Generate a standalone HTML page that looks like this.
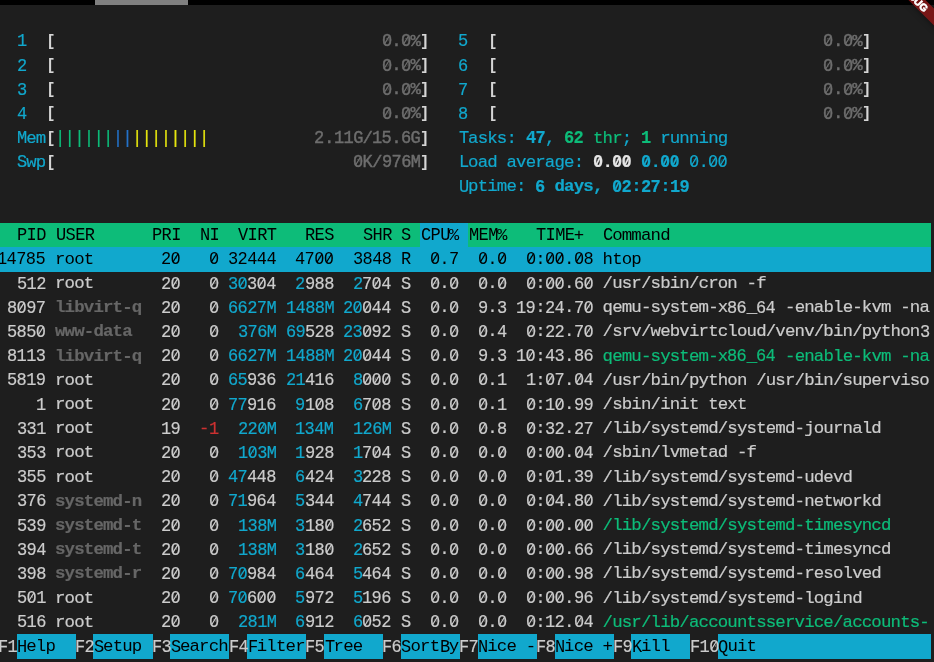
<!DOCTYPE html>
<html><head><meta charset="utf-8"><style>
html,body{margin:0;padding:0;width:934px;height:662px;overflow:hidden;background:#1e1e1e;}
#scr{position:absolute;left:0;top:0;width:934px;height:662px;overflow:hidden;background:#1e1e1e;}
.bg{position:absolute;}
.t{position:absolute;white-space:pre;font-family:"Liberation Mono",monospace;font-size:17.4px;letter-spacing:-0.836px;-webkit-text-stroke:0.2px currentColor;line-height:24.206px;height:24.206px;}
.b{font-weight:bold;}
.d{font-size:18.9px;letter-spacing:-0.6689px;transform:scaleX(0.9);transform-origin:0 0;}
.k{-webkit-text-stroke:0;}
.m{-webkit-text-stroke:0.45px currentColor;}
#txt{position:absolute;left:0;top:0;width:934px;height:662px;will-change:transform;}
#topbar{position:absolute;left:0;top:0;width:934px;height:4.9px;background:#000;}
#thumb{position:absolute;left:95px;top:0;width:92.7px;height:4.9px;background:#808080;}
#bshadow{position:absolute;width:80px;height:12px;background:rgba(0,0,0,0.5);box-shadow:0 0 6px rgba(0,0,0,0.5);transform-origin:40px -28px;transform:rotate(45deg);}
#banner{position:absolute;width:80px;height:12px;background:rgba(183,28,28,0.627);
 transform-origin:40px -28px;transform:rotate(45deg);font-family:"Liberation Sans",sans-serif;font-weight:bold;font-size:10.2px;line-height:14px;color:#fff;text-align:center;-webkit-text-stroke:0.7px #fff;text-indent:2px;}
</style></head><body><div id="scr">

<div class="bg" style="left:-2.60px;top:222.70px;width:933.23px;height:25.00px;background:#0dbc79"></div>
<div class="bg" style="left:420.04px;top:222.70px;width:48.03px;height:25.00px;background:#11a8cd"></div>
<div class="bg" style="left:-2.60px;top:246.91px;width:933.23px;height:25.00px;background:#11a8cd"></div>
<div class="bg" style="left:16.61px;top:634.21px;width:59.13px;height:25.00px;background:#11a8cd"></div>
<div class="bg" style="left:93.45px;top:634.21px;width:59.13px;height:25.00px;background:#11a8cd"></div>
<div class="bg" style="left:170.30px;top:634.21px;width:59.13px;height:25.00px;background:#11a8cd"></div>
<div class="bg" style="left:247.14px;top:634.21px;width:59.13px;height:25.00px;background:#11a8cd"></div>
<div class="bg" style="left:323.99px;top:634.21px;width:59.13px;height:25.00px;background:#11a8cd"></div>
<div class="bg" style="left:400.83px;top:634.21px;width:59.13px;height:25.00px;background:#11a8cd"></div>
<div class="bg" style="left:477.67px;top:634.21px;width:59.13px;height:25.00px;background:#11a8cd"></div>
<div class="bg" style="left:554.52px;top:634.21px;width:59.13px;height:25.00px;background:#11a8cd"></div>
<div class="bg" style="left:631.36px;top:634.21px;width:59.13px;height:25.00px;background:#11a8cd"></div>
<div class="bg" style="left:717.81px;top:634.21px;width:212.82px;height:25.00px;background:#11a8cd"></div>
<div id="txt">
<div class="t d" style="left:16.61px;top:29.46px;color:#11a8cd">1</div>
<div class="t b" style="left:45.43px;top:29.86px;color:#e5e5e5;transform-origin:8.1px 4.3px;transform:translateY(1.2px) scale(0.83,0.9);color:#d6d6d6">[</div>
<div class="t m d" style="left:381.62px;top:29.46px;color:#6e6e6e">0</div>
<div class="t m" style="left:391.23px;top:29.86px;color:#6e6e6e">.</div>
<div class="t m d" style="left:400.83px;top:29.46px;color:#6e6e6e">0</div>
<div class="t m" style="left:410.44px;top:29.86px;color:#6e6e6e">%</div>
<div class="t b" style="left:420.04px;top:29.86px;color:#e5e5e5;transform-origin:1.9px 4.3px;transform:translateY(1.2px) scale(0.83,0.9);color:#d6d6d6">]</div>
<div class="t d" style="left:458.46px;top:29.46px;color:#11a8cd">5</div>
<div class="t b" style="left:487.28px;top:29.86px;color:#e5e5e5;transform-origin:8.1px 4.3px;transform:translateY(1.2px) scale(0.83,0.9);color:#d6d6d6">[</div>
<div class="t m d" style="left:823.47px;top:29.46px;color:#6e6e6e">0</div>
<div class="t m" style="left:833.08px;top:29.86px;color:#6e6e6e">.</div>
<div class="t m d" style="left:842.68px;top:29.46px;color:#6e6e6e">0</div>
<div class="t m" style="left:852.29px;top:29.86px;color:#6e6e6e">%</div>
<div class="t b" style="left:861.89px;top:29.86px;color:#e5e5e5;transform-origin:1.9px 4.3px;transform:translateY(1.2px) scale(0.83,0.9);color:#d6d6d6">]</div>
<div class="t d" style="left:16.61px;top:53.66px;color:#11a8cd">2</div>
<div class="t b" style="left:45.43px;top:54.06px;color:#e5e5e5;transform-origin:8.1px 4.3px;transform:translateY(1.2px) scale(0.83,0.9);color:#d6d6d6">[</div>
<div class="t m d" style="left:381.62px;top:53.66px;color:#6e6e6e">0</div>
<div class="t m" style="left:391.23px;top:54.06px;color:#6e6e6e">.</div>
<div class="t m d" style="left:400.83px;top:53.66px;color:#6e6e6e">0</div>
<div class="t m" style="left:410.44px;top:54.06px;color:#6e6e6e">%</div>
<div class="t b" style="left:420.04px;top:54.06px;color:#e5e5e5;transform-origin:1.9px 4.3px;transform:translateY(1.2px) scale(0.83,0.9);color:#d6d6d6">]</div>
<div class="t d" style="left:458.46px;top:53.66px;color:#11a8cd">6</div>
<div class="t b" style="left:487.28px;top:54.06px;color:#e5e5e5;transform-origin:8.1px 4.3px;transform:translateY(1.2px) scale(0.83,0.9);color:#d6d6d6">[</div>
<div class="t m d" style="left:823.47px;top:53.66px;color:#6e6e6e">0</div>
<div class="t m" style="left:833.08px;top:54.06px;color:#6e6e6e">.</div>
<div class="t m d" style="left:842.68px;top:53.66px;color:#6e6e6e">0</div>
<div class="t m" style="left:852.29px;top:54.06px;color:#6e6e6e">%</div>
<div class="t b" style="left:861.89px;top:54.06px;color:#e5e5e5;transform-origin:1.9px 4.3px;transform:translateY(1.2px) scale(0.83,0.9);color:#d6d6d6">]</div>
<div class="t d" style="left:16.61px;top:77.87px;color:#11a8cd">3</div>
<div class="t b" style="left:45.43px;top:78.27px;color:#e5e5e5;transform-origin:8.1px 4.3px;transform:translateY(1.2px) scale(0.83,0.9);color:#d6d6d6">[</div>
<div class="t m d" style="left:381.62px;top:77.87px;color:#6e6e6e">0</div>
<div class="t m" style="left:391.23px;top:78.27px;color:#6e6e6e">.</div>
<div class="t m d" style="left:400.83px;top:77.87px;color:#6e6e6e">0</div>
<div class="t m" style="left:410.44px;top:78.27px;color:#6e6e6e">%</div>
<div class="t b" style="left:420.04px;top:78.27px;color:#e5e5e5;transform-origin:1.9px 4.3px;transform:translateY(1.2px) scale(0.83,0.9);color:#d6d6d6">]</div>
<div class="t d" style="left:458.46px;top:77.87px;color:#11a8cd">7</div>
<div class="t b" style="left:487.28px;top:78.27px;color:#e5e5e5;transform-origin:8.1px 4.3px;transform:translateY(1.2px) scale(0.83,0.9);color:#d6d6d6">[</div>
<div class="t m d" style="left:823.47px;top:77.87px;color:#6e6e6e">0</div>
<div class="t m" style="left:833.08px;top:78.27px;color:#6e6e6e">.</div>
<div class="t m d" style="left:842.68px;top:77.87px;color:#6e6e6e">0</div>
<div class="t m" style="left:852.29px;top:78.27px;color:#6e6e6e">%</div>
<div class="t b" style="left:861.89px;top:78.27px;color:#e5e5e5;transform-origin:1.9px 4.3px;transform:translateY(1.2px) scale(0.83,0.9);color:#d6d6d6">]</div>
<div class="t d" style="left:16.61px;top:102.07px;color:#11a8cd">4</div>
<div class="t b" style="left:45.43px;top:102.47px;color:#e5e5e5;transform-origin:8.1px 4.3px;transform:translateY(1.2px) scale(0.83,0.9);color:#d6d6d6">[</div>
<div class="t m d" style="left:381.62px;top:102.07px;color:#6e6e6e">0</div>
<div class="t m" style="left:391.23px;top:102.47px;color:#6e6e6e">.</div>
<div class="t m d" style="left:400.83px;top:102.07px;color:#6e6e6e">0</div>
<div class="t m" style="left:410.44px;top:102.47px;color:#6e6e6e">%</div>
<div class="t b" style="left:420.04px;top:102.47px;color:#e5e5e5;transform-origin:1.9px 4.3px;transform:translateY(1.2px) scale(0.83,0.9);color:#d6d6d6">]</div>
<div class="t d" style="left:458.46px;top:102.07px;color:#11a8cd">8</div>
<div class="t b" style="left:487.28px;top:102.47px;color:#e5e5e5;transform-origin:8.1px 4.3px;transform:translateY(1.2px) scale(0.83,0.9);color:#d6d6d6">[</div>
<div class="t m d" style="left:823.47px;top:102.07px;color:#6e6e6e">0</div>
<div class="t m" style="left:833.08px;top:102.47px;color:#6e6e6e">.</div>
<div class="t m d" style="left:842.68px;top:102.07px;color:#6e6e6e">0</div>
<div class="t m" style="left:852.29px;top:102.47px;color:#6e6e6e">%</div>
<div class="t b" style="left:861.89px;top:102.47px;color:#e5e5e5;transform-origin:1.9px 4.3px;transform:translateY(1.2px) scale(0.83,0.9);color:#d6d6d6">]</div>
<div class="t d" style="left:17.21px;top:126.28px;color:#11a8cd">M</div>
<div class="t" style="left:26.22px;top:126.68px;color:#11a8cd">em</div>
<div class="t b" style="left:45.43px;top:126.68px;color:#e5e5e5;transform-origin:8.1px 4.3px;transform:translateY(1.2px) scale(0.83,0.9);color:#d6d6d6">[</div>
<div class="t" style="left:55.03px;top:126.68px;color:#0dbc79;transform-origin:0 11.8px;transform:scaleY(1.1)">||||||</div>
<div class="t" style="left:112.67px;top:126.68px;color:#2472c8;transform-origin:0 11.8px;transform:scaleY(1.1)">||</div>
<div class="t" style="left:131.88px;top:126.68px;color:#e5e510;transform-origin:0 11.8px;transform:scaleY(1.1)">||||||||</div>
<div class="t m d" style="left:314.38px;top:126.28px;color:#6e6e6e">2</div>
<div class="t m" style="left:323.99px;top:126.68px;color:#6e6e6e">.</div>
<div class="t m d" style="left:333.59px;top:126.28px;color:#6e6e6e">11G</div>
<div class="t m" style="left:362.41px;top:126.68px;color:#6e6e6e">/</div>
<div class="t m d" style="left:372.01px;top:126.28px;color:#6e6e6e">15</div>
<div class="t m" style="left:391.23px;top:126.68px;color:#6e6e6e">.</div>
<div class="t m d" style="left:400.83px;top:126.28px;color:#6e6e6e">6G</div>
<div class="t b" style="left:420.04px;top:126.68px;color:#e5e5e5;transform-origin:1.9px 4.3px;transform:translateY(1.2px) scale(0.83,0.9);color:#d6d6d6">]</div>
<div class="t d" style="left:459.06px;top:126.28px;color:#11a8cd">T</div>
<div class="t" style="left:468.07px;top:126.68px;color:#11a8cd">asks: </div>
<div class="t b d" style="left:525.70px;top:126.28px;color:#11a8cd">47</div>
<div class="t" style="left:544.91px;top:126.68px;color:#11a8cd">, </div>
<div class="t b d" style="left:564.12px;top:126.28px;color:#0dbc79">62</div>
<div class="t" style="left:583.34px;top:126.68px;color:#0dbc79"> thr</div>
<div class="t" style="left:621.76px;top:126.68px;color:#11a8cd">; </div>
<div class="t b d" style="left:640.97px;top:126.28px;color:#0dbc79">1</div>
<div class="t" style="left:650.57px;top:126.68px;color:#11a8cd"> running</div>
<div class="t d" style="left:17.21px;top:150.49px;color:#11a8cd">S</div>
<div class="t" style="left:26.22px;top:150.89px;color:#11a8cd">wp</div>
<div class="t b" style="left:45.43px;top:150.89px;color:#e5e5e5;transform-origin:8.1px 4.3px;transform:translateY(1.2px) scale(0.83,0.9);color:#d6d6d6">[</div>
<div class="t m d" style="left:352.80px;top:150.49px;color:#6e6e6e">0K</div>
<div class="t m" style="left:372.01px;top:150.89px;color:#6e6e6e">/</div>
<div class="t m d" style="left:381.62px;top:150.49px;color:#6e6e6e">976M</div>
<div class="t b" style="left:420.04px;top:150.89px;color:#e5e5e5;transform-origin:1.9px 4.3px;transform:translateY(1.2px) scale(0.83,0.9);color:#d6d6d6">]</div>
<div class="t d" style="left:459.06px;top:150.49px;color:#11a8cd">L</div>
<div class="t" style="left:468.07px;top:150.89px;color:#11a8cd">oad average: </div>
<div class="t b d" style="left:592.94px;top:150.49px;color:#e5e5e5">0</div>
<div class="t b" style="left:602.55px;top:150.89px;color:#e5e5e5">.</div>
<div class="t b d" style="left:612.15px;top:150.49px;color:#e5e5e5">00</div>
<div class="t b d" style="left:640.97px;top:150.49px;color:#11a8cd">0</div>
<div class="t b" style="left:650.57px;top:150.89px;color:#11a8cd">.</div>
<div class="t b d" style="left:660.18px;top:150.49px;color:#11a8cd">00</div>
<div class="t d" style="left:689.00px;top:150.49px;color:#11a8cd">0</div>
<div class="t" style="left:698.60px;top:150.89px;color:#11a8cd">.</div>
<div class="t d" style="left:708.21px;top:150.49px;color:#11a8cd">00</div>
<div class="t d" style="left:459.06px;top:174.69px;color:#11a8cd">U</div>
<div class="t" style="left:468.07px;top:175.09px;color:#11a8cd">ptime: </div>
<div class="t b d" style="left:535.31px;top:174.69px;color:#11a8cd">6</div>
<div class="t b" style="left:544.91px;top:175.09px;color:#11a8cd"> days, </div>
<div class="t b d" style="left:612.15px;top:174.69px;color:#11a8cd">02</div>
<div class="t b" style="left:631.36px;top:175.09px;color:#11a8cd">:</div>
<div class="t b d" style="left:640.97px;top:174.69px;color:#11a8cd">27</div>
<div class="t b" style="left:660.18px;top:175.09px;color:#11a8cd">:</div>
<div class="t b d" style="left:669.78px;top:174.69px;color:#11a8cd">19</div>
<div class="t k d" style="left:17.21px;top:223.10px;color:#000000">PID</div>
<div class="t k d" style="left:55.63px;top:223.10px;color:#000000">USER</div>
<div class="t k d" style="left:151.69px;top:223.10px;color:#000000">PRI</div>
<div class="t k d" style="left:199.72px;top:223.10px;color:#000000">NI</div>
<div class="t k d" style="left:238.14px;top:223.10px;color:#000000">VIRT</div>
<div class="t k d" style="left:305.38px;top:223.10px;color:#000000">RES</div>
<div class="t k d" style="left:363.01px;top:223.10px;color:#000000">SHR</div>
<div class="t k d" style="left:401.43px;top:223.10px;color:#000000">S</div>
<div class="t k d" style="left:420.64px;top:223.10px;color:#000000">CPU</div>
<div class="t k" style="left:448.86px;top:223.50px;color:#000000">% </div>
<div class="t k d" style="left:468.67px;top:223.10px;color:#000000">MEM</div>
<div class="t k" style="left:496.89px;top:223.50px;color:#000000">%   </div>
<div class="t k d" style="left:535.91px;top:223.10px;color:#000000">TIME</div>
<div class="t k" style="left:573.73px;top:223.50px;color:#000000">+  </div>
<div class="t k d" style="left:603.15px;top:223.10px;color:#000000">C</div>
<div class="t k" style="left:612.15px;top:223.50px;color:#000000">ommand</div>
<div class="t k d" style="left:-2.60px;top:247.31px;color:#000000">14785</div>
<div class="t k" style="left:45.43px;top:247.71px;color:#000000"> root       </div>
<div class="t k d" style="left:160.69px;top:247.31px;color:#000000">20</div>
<div class="t k d" style="left:208.72px;top:247.31px;color:#000000">0</div>
<div class="t k d" style="left:227.93px;top:247.31px;color:#000000">32444</div>
<div class="t k d" style="left:295.17px;top:247.31px;color:#000000">4700</div>
<div class="t k d" style="left:352.80px;top:247.31px;color:#000000">3848</div>
<div class="t k d" style="left:401.43px;top:247.31px;color:#000000">R</div>
<div class="t k d" style="left:429.65px;top:247.31px;color:#000000">0</div>
<div class="t k" style="left:439.25px;top:247.71px;color:#000000">.</div>
<div class="t k d" style="left:448.86px;top:247.31px;color:#000000">7</div>
<div class="t k d" style="left:477.67px;top:247.31px;color:#000000">0</div>
<div class="t k" style="left:487.28px;top:247.71px;color:#000000">.</div>
<div class="t k d" style="left:496.89px;top:247.31px;color:#000000">0</div>
<div class="t k d" style="left:525.70px;top:247.31px;color:#000000">0</div>
<div class="t k" style="left:535.31px;top:247.71px;color:#000000">:</div>
<div class="t k d" style="left:544.91px;top:247.31px;color:#000000">00</div>
<div class="t k" style="left:564.12px;top:247.71px;color:#000000">.</div>
<div class="t k d" style="left:573.73px;top:247.31px;color:#000000">08</div>
<div class="t k" style="left:592.94px;top:247.71px;color:#000000"> htop</div>
<div class="t d" style="left:16.61px;top:271.52px;color:#cccccc">512</div>
<div class="t" style="left:55.03px;top:271.92px;color:#cccccc">root</div>
<div class="t d" style="left:160.69px;top:271.52px;color:#cccccc">20</div>
<div class="t d" style="left:208.72px;top:271.52px;color:#cccccc">0</div>
<div class="t d" style="left:227.93px;top:271.52px;color:#11a8cd">30</div>
<div class="t d" style="left:247.14px;top:271.52px;color:#cccccc">304</div>
<div class="t d" style="left:295.17px;top:271.52px;color:#11a8cd">2</div>
<div class="t d" style="left:304.78px;top:271.52px;color:#cccccc">988</div>
<div class="t d" style="left:352.80px;top:271.52px;color:#11a8cd">2</div>
<div class="t d" style="left:362.41px;top:271.52px;color:#cccccc">704</div>
<div class="t d" style="left:401.43px;top:271.52px;color:#cccccc">S</div>
<div class="t d" style="left:429.65px;top:271.52px;color:#cccccc">0</div>
<div class="t" style="left:439.25px;top:271.92px;color:#cccccc">.</div>
<div class="t d" style="left:448.86px;top:271.52px;color:#cccccc">0</div>
<div class="t d" style="left:477.67px;top:271.52px;color:#cccccc">0</div>
<div class="t" style="left:487.28px;top:271.92px;color:#cccccc">.</div>
<div class="t d" style="left:496.89px;top:271.52px;color:#cccccc">0</div>
<div class="t d" style="left:525.70px;top:271.52px;color:#cccccc">0</div>
<div class="t" style="left:535.31px;top:271.92px;color:#cccccc">:</div>
<div class="t d" style="left:544.91px;top:271.52px;color:#cccccc">00</div>
<div class="t" style="left:564.12px;top:271.92px;color:#cccccc">.</div>
<div class="t d" style="left:573.73px;top:271.52px;color:#cccccc">60</div>
<div class="t" style="left:602.55px;top:271.92px;color:#cccccc">/usr/sbin/cron -f</div>
<div class="t d" style="left:7.01px;top:295.72px;color:#cccccc">8097</div>
<div class="t b" style="left:55.03px;top:296.12px;color:#666666">libvirt-q</div>
<div class="t d" style="left:160.69px;top:295.72px;color:#cccccc">20</div>
<div class="t d" style="left:208.72px;top:295.72px;color:#cccccc">0</div>
<div class="t d" style="left:227.93px;top:295.72px;color:#11a8cd">6627M</div>
<div class="t d" style="left:285.56px;top:295.72px;color:#11a8cd">1488M</div>
<div class="t d" style="left:343.20px;top:295.72px;color:#11a8cd">20</div>
<div class="t d" style="left:362.41px;top:295.72px;color:#cccccc">044</div>
<div class="t d" style="left:401.43px;top:295.72px;color:#cccccc">S</div>
<div class="t d" style="left:429.65px;top:295.72px;color:#cccccc">0</div>
<div class="t" style="left:439.25px;top:296.12px;color:#cccccc">.</div>
<div class="t d" style="left:448.86px;top:295.72px;color:#cccccc">0</div>
<div class="t d" style="left:477.67px;top:295.72px;color:#cccccc">9</div>
<div class="t" style="left:487.28px;top:296.12px;color:#cccccc">.</div>
<div class="t d" style="left:496.89px;top:295.72px;color:#cccccc">3</div>
<div class="t d" style="left:516.10px;top:295.72px;color:#cccccc">19</div>
<div class="t" style="left:535.31px;top:296.12px;color:#cccccc">:</div>
<div class="t d" style="left:544.91px;top:295.72px;color:#cccccc">24</div>
<div class="t" style="left:564.12px;top:296.12px;color:#cccccc">.</div>
<div class="t d" style="left:573.73px;top:295.72px;color:#cccccc">70</div>
<div class="t" style="left:602.55px;top:296.12px;color:#cccccc">qemu-system-x</div>
<div class="t d" style="left:727.42px;top:295.72px;color:#cccccc">86</div>
<div class="t" style="left:746.63px;top:296.12px;color:#cccccc">_</div>
<div class="t d" style="left:756.23px;top:295.72px;color:#cccccc">64</div>
<div class="t" style="left:775.45px;top:296.12px;color:#cccccc"> -enable-kvm -na</div>
<div class="t d" style="left:7.01px;top:319.93px;color:#cccccc">5850</div>
<div class="t b" style="left:55.03px;top:320.33px;color:#666666">www-data</div>
<div class="t d" style="left:160.69px;top:319.93px;color:#cccccc">20</div>
<div class="t d" style="left:208.72px;top:319.93px;color:#cccccc">0</div>
<div class="t d" style="left:237.54px;top:319.93px;color:#11a8cd">376M</div>
<div class="t d" style="left:285.56px;top:319.93px;color:#11a8cd">69</div>
<div class="t d" style="left:304.78px;top:319.93px;color:#cccccc">528</div>
<div class="t d" style="left:343.20px;top:319.93px;color:#11a8cd">23</div>
<div class="t d" style="left:362.41px;top:319.93px;color:#cccccc">092</div>
<div class="t d" style="left:401.43px;top:319.93px;color:#cccccc">S</div>
<div class="t d" style="left:429.65px;top:319.93px;color:#cccccc">0</div>
<div class="t" style="left:439.25px;top:320.33px;color:#cccccc">.</div>
<div class="t d" style="left:448.86px;top:319.93px;color:#cccccc">0</div>
<div class="t d" style="left:477.67px;top:319.93px;color:#cccccc">0</div>
<div class="t" style="left:487.28px;top:320.33px;color:#cccccc">.</div>
<div class="t d" style="left:496.89px;top:319.93px;color:#cccccc">4</div>
<div class="t d" style="left:525.70px;top:319.93px;color:#cccccc">0</div>
<div class="t" style="left:535.31px;top:320.33px;color:#cccccc">:</div>
<div class="t d" style="left:544.91px;top:319.93px;color:#cccccc">22</div>
<div class="t" style="left:564.12px;top:320.33px;color:#cccccc">.</div>
<div class="t d" style="left:573.73px;top:319.93px;color:#cccccc">70</div>
<div class="t" style="left:602.55px;top:320.33px;color:#cccccc">/srv/webvirtcloud/venv/bin/python</div>
<div class="t d" style="left:919.53px;top:319.93px;color:#cccccc">3</div>
<div class="t d" style="left:7.01px;top:344.13px;color:#cccccc">8113</div>
<div class="t b" style="left:55.03px;top:344.53px;color:#666666">libvirt-q</div>
<div class="t d" style="left:160.69px;top:344.13px;color:#cccccc">20</div>
<div class="t d" style="left:208.72px;top:344.13px;color:#cccccc">0</div>
<div class="t d" style="left:227.93px;top:344.13px;color:#11a8cd">6627M</div>
<div class="t d" style="left:285.56px;top:344.13px;color:#11a8cd">1488M</div>
<div class="t d" style="left:343.20px;top:344.13px;color:#11a8cd">20</div>
<div class="t d" style="left:362.41px;top:344.13px;color:#cccccc">044</div>
<div class="t d" style="left:401.43px;top:344.13px;color:#cccccc">S</div>
<div class="t d" style="left:429.65px;top:344.13px;color:#cccccc">0</div>
<div class="t" style="left:439.25px;top:344.53px;color:#cccccc">.</div>
<div class="t d" style="left:448.86px;top:344.13px;color:#cccccc">0</div>
<div class="t d" style="left:477.67px;top:344.13px;color:#cccccc">9</div>
<div class="t" style="left:487.28px;top:344.53px;color:#cccccc">.</div>
<div class="t d" style="left:496.89px;top:344.13px;color:#cccccc">3</div>
<div class="t d" style="left:516.10px;top:344.13px;color:#cccccc">10</div>
<div class="t" style="left:535.31px;top:344.53px;color:#cccccc">:</div>
<div class="t d" style="left:544.91px;top:344.13px;color:#cccccc">43</div>
<div class="t" style="left:564.12px;top:344.53px;color:#cccccc">.</div>
<div class="t d" style="left:573.73px;top:344.13px;color:#cccccc">86</div>
<div class="t" style="left:602.55px;top:344.53px;color:#0dbc79">qemu-system-x</div>
<div class="t d" style="left:727.42px;top:344.13px;color:#0dbc79">86</div>
<div class="t" style="left:746.63px;top:344.53px;color:#0dbc79">_</div>
<div class="t d" style="left:756.23px;top:344.13px;color:#0dbc79">64</div>
<div class="t" style="left:775.45px;top:344.53px;color:#0dbc79"> -enable-kvm -na</div>
<div class="t d" style="left:7.01px;top:368.34px;color:#cccccc">5819</div>
<div class="t" style="left:55.03px;top:368.74px;color:#cccccc">root</div>
<div class="t d" style="left:160.69px;top:368.34px;color:#cccccc">20</div>
<div class="t d" style="left:208.72px;top:368.34px;color:#cccccc">0</div>
<div class="t d" style="left:227.93px;top:368.34px;color:#11a8cd">65</div>
<div class="t d" style="left:247.14px;top:368.34px;color:#cccccc">936</div>
<div class="t d" style="left:285.56px;top:368.34px;color:#11a8cd">21</div>
<div class="t d" style="left:304.78px;top:368.34px;color:#cccccc">416</div>
<div class="t d" style="left:352.80px;top:368.34px;color:#11a8cd">8</div>
<div class="t d" style="left:362.41px;top:368.34px;color:#cccccc">000</div>
<div class="t d" style="left:401.43px;top:368.34px;color:#cccccc">S</div>
<div class="t d" style="left:429.65px;top:368.34px;color:#cccccc">0</div>
<div class="t" style="left:439.25px;top:368.74px;color:#cccccc">.</div>
<div class="t d" style="left:448.86px;top:368.34px;color:#cccccc">0</div>
<div class="t d" style="left:477.67px;top:368.34px;color:#cccccc">0</div>
<div class="t" style="left:487.28px;top:368.74px;color:#cccccc">.</div>
<div class="t d" style="left:496.89px;top:368.34px;color:#cccccc">1</div>
<div class="t d" style="left:525.70px;top:368.34px;color:#cccccc">1</div>
<div class="t" style="left:535.31px;top:368.74px;color:#cccccc">:</div>
<div class="t d" style="left:544.91px;top:368.34px;color:#cccccc">07</div>
<div class="t" style="left:564.12px;top:368.74px;color:#cccccc">.</div>
<div class="t d" style="left:573.73px;top:368.34px;color:#cccccc">04</div>
<div class="t" style="left:602.55px;top:368.74px;color:#cccccc">/usr/bin/python /usr/bin/superviso</div>
<div class="t d" style="left:35.82px;top:392.55px;color:#cccccc">1</div>
<div class="t" style="left:55.03px;top:392.95px;color:#cccccc">root</div>
<div class="t d" style="left:160.69px;top:392.55px;color:#cccccc">20</div>
<div class="t d" style="left:208.72px;top:392.55px;color:#cccccc">0</div>
<div class="t d" style="left:227.93px;top:392.55px;color:#11a8cd">77</div>
<div class="t d" style="left:247.14px;top:392.55px;color:#cccccc">916</div>
<div class="t d" style="left:295.17px;top:392.55px;color:#11a8cd">9</div>
<div class="t d" style="left:304.78px;top:392.55px;color:#cccccc">108</div>
<div class="t d" style="left:352.80px;top:392.55px;color:#11a8cd">6</div>
<div class="t d" style="left:362.41px;top:392.55px;color:#cccccc">708</div>
<div class="t d" style="left:401.43px;top:392.55px;color:#cccccc">S</div>
<div class="t d" style="left:429.65px;top:392.55px;color:#cccccc">0</div>
<div class="t" style="left:439.25px;top:392.95px;color:#cccccc">.</div>
<div class="t d" style="left:448.86px;top:392.55px;color:#cccccc">0</div>
<div class="t d" style="left:477.67px;top:392.55px;color:#cccccc">0</div>
<div class="t" style="left:487.28px;top:392.95px;color:#cccccc">.</div>
<div class="t d" style="left:496.89px;top:392.55px;color:#cccccc">1</div>
<div class="t d" style="left:525.70px;top:392.55px;color:#cccccc">0</div>
<div class="t" style="left:535.31px;top:392.95px;color:#cccccc">:</div>
<div class="t d" style="left:544.91px;top:392.55px;color:#cccccc">10</div>
<div class="t" style="left:564.12px;top:392.95px;color:#cccccc">.</div>
<div class="t d" style="left:573.73px;top:392.55px;color:#cccccc">99</div>
<div class="t" style="left:602.55px;top:392.95px;color:#cccccc">/sbin/init text</div>
<div class="t d" style="left:16.61px;top:416.75px;color:#cccccc">331</div>
<div class="t" style="left:55.03px;top:417.15px;color:#cccccc">root</div>
<div class="t d" style="left:160.69px;top:416.75px;color:#cccccc">19</div>
<div class="t" style="left:199.12px;top:417.15px;color:#cd3131">-</div>
<div class="t d" style="left:208.72px;top:416.75px;color:#cd3131">1</div>
<div class="t d" style="left:237.54px;top:416.75px;color:#11a8cd">220M</div>
<div class="t d" style="left:295.17px;top:416.75px;color:#11a8cd">134M</div>
<div class="t d" style="left:352.80px;top:416.75px;color:#11a8cd">126M</div>
<div class="t d" style="left:401.43px;top:416.75px;color:#cccccc">S</div>
<div class="t d" style="left:429.65px;top:416.75px;color:#cccccc">0</div>
<div class="t" style="left:439.25px;top:417.15px;color:#cccccc">.</div>
<div class="t d" style="left:448.86px;top:416.75px;color:#cccccc">0</div>
<div class="t d" style="left:477.67px;top:416.75px;color:#cccccc">0</div>
<div class="t" style="left:487.28px;top:417.15px;color:#cccccc">.</div>
<div class="t d" style="left:496.89px;top:416.75px;color:#cccccc">8</div>
<div class="t d" style="left:525.70px;top:416.75px;color:#cccccc">0</div>
<div class="t" style="left:535.31px;top:417.15px;color:#cccccc">:</div>
<div class="t d" style="left:544.91px;top:416.75px;color:#cccccc">32</div>
<div class="t" style="left:564.12px;top:417.15px;color:#cccccc">.</div>
<div class="t d" style="left:573.73px;top:416.75px;color:#cccccc">27</div>
<div class="t" style="left:602.55px;top:417.15px;color:#cccccc">/lib/systemd/systemd-journald</div>
<div class="t d" style="left:16.61px;top:440.96px;color:#cccccc">353</div>
<div class="t" style="left:55.03px;top:441.36px;color:#cccccc">root</div>
<div class="t d" style="left:160.69px;top:440.96px;color:#cccccc">20</div>
<div class="t d" style="left:208.72px;top:440.96px;color:#cccccc">0</div>
<div class="t d" style="left:237.54px;top:440.96px;color:#11a8cd">103M</div>
<div class="t d" style="left:295.17px;top:440.96px;color:#11a8cd">1</div>
<div class="t d" style="left:304.78px;top:440.96px;color:#cccccc">928</div>
<div class="t d" style="left:352.80px;top:440.96px;color:#11a8cd">1</div>
<div class="t d" style="left:362.41px;top:440.96px;color:#cccccc">704</div>
<div class="t d" style="left:401.43px;top:440.96px;color:#cccccc">S</div>
<div class="t d" style="left:429.65px;top:440.96px;color:#cccccc">0</div>
<div class="t" style="left:439.25px;top:441.36px;color:#cccccc">.</div>
<div class="t d" style="left:448.86px;top:440.96px;color:#cccccc">0</div>
<div class="t d" style="left:477.67px;top:440.96px;color:#cccccc">0</div>
<div class="t" style="left:487.28px;top:441.36px;color:#cccccc">.</div>
<div class="t d" style="left:496.89px;top:440.96px;color:#cccccc">0</div>
<div class="t d" style="left:525.70px;top:440.96px;color:#cccccc">0</div>
<div class="t" style="left:535.31px;top:441.36px;color:#cccccc">:</div>
<div class="t d" style="left:544.91px;top:440.96px;color:#cccccc">00</div>
<div class="t" style="left:564.12px;top:441.36px;color:#cccccc">.</div>
<div class="t d" style="left:573.73px;top:440.96px;color:#cccccc">04</div>
<div class="t" style="left:602.55px;top:441.36px;color:#cccccc">/sbin/lvmetad -f</div>
<div class="t d" style="left:16.61px;top:465.16px;color:#cccccc">355</div>
<div class="t" style="left:55.03px;top:465.56px;color:#cccccc">root</div>
<div class="t d" style="left:160.69px;top:465.16px;color:#cccccc">20</div>
<div class="t d" style="left:208.72px;top:465.16px;color:#cccccc">0</div>
<div class="t d" style="left:227.93px;top:465.16px;color:#11a8cd">47</div>
<div class="t d" style="left:247.14px;top:465.16px;color:#cccccc">448</div>
<div class="t d" style="left:295.17px;top:465.16px;color:#11a8cd">6</div>
<div class="t d" style="left:304.78px;top:465.16px;color:#cccccc">424</div>
<div class="t d" style="left:352.80px;top:465.16px;color:#11a8cd">3</div>
<div class="t d" style="left:362.41px;top:465.16px;color:#cccccc">228</div>
<div class="t d" style="left:401.43px;top:465.16px;color:#cccccc">S</div>
<div class="t d" style="left:429.65px;top:465.16px;color:#cccccc">0</div>
<div class="t" style="left:439.25px;top:465.56px;color:#cccccc">.</div>
<div class="t d" style="left:448.86px;top:465.16px;color:#cccccc">0</div>
<div class="t d" style="left:477.67px;top:465.16px;color:#cccccc">0</div>
<div class="t" style="left:487.28px;top:465.56px;color:#cccccc">.</div>
<div class="t d" style="left:496.89px;top:465.16px;color:#cccccc">0</div>
<div class="t d" style="left:525.70px;top:465.16px;color:#cccccc">0</div>
<div class="t" style="left:535.31px;top:465.56px;color:#cccccc">:</div>
<div class="t d" style="left:544.91px;top:465.16px;color:#cccccc">01</div>
<div class="t" style="left:564.12px;top:465.56px;color:#cccccc">.</div>
<div class="t d" style="left:573.73px;top:465.16px;color:#cccccc">39</div>
<div class="t" style="left:602.55px;top:465.56px;color:#cccccc">/lib/systemd/systemd-udevd</div>
<div class="t d" style="left:16.61px;top:489.37px;color:#cccccc">376</div>
<div class="t b" style="left:55.03px;top:489.77px;color:#666666">systemd-n</div>
<div class="t d" style="left:160.69px;top:489.37px;color:#cccccc">20</div>
<div class="t d" style="left:208.72px;top:489.37px;color:#cccccc">0</div>
<div class="t d" style="left:227.93px;top:489.37px;color:#11a8cd">71</div>
<div class="t d" style="left:247.14px;top:489.37px;color:#cccccc">964</div>
<div class="t d" style="left:295.17px;top:489.37px;color:#11a8cd">5</div>
<div class="t d" style="left:304.78px;top:489.37px;color:#cccccc">344</div>
<div class="t d" style="left:352.80px;top:489.37px;color:#11a8cd">4</div>
<div class="t d" style="left:362.41px;top:489.37px;color:#cccccc">744</div>
<div class="t d" style="left:401.43px;top:489.37px;color:#cccccc">S</div>
<div class="t d" style="left:429.65px;top:489.37px;color:#cccccc">0</div>
<div class="t" style="left:439.25px;top:489.77px;color:#cccccc">.</div>
<div class="t d" style="left:448.86px;top:489.37px;color:#cccccc">0</div>
<div class="t d" style="left:477.67px;top:489.37px;color:#cccccc">0</div>
<div class="t" style="left:487.28px;top:489.77px;color:#cccccc">.</div>
<div class="t d" style="left:496.89px;top:489.37px;color:#cccccc">0</div>
<div class="t d" style="left:525.70px;top:489.37px;color:#cccccc">0</div>
<div class="t" style="left:535.31px;top:489.77px;color:#cccccc">:</div>
<div class="t d" style="left:544.91px;top:489.37px;color:#cccccc">04</div>
<div class="t" style="left:564.12px;top:489.77px;color:#cccccc">.</div>
<div class="t d" style="left:573.73px;top:489.37px;color:#cccccc">80</div>
<div class="t" style="left:602.55px;top:489.77px;color:#cccccc">/lib/systemd/systemd-networkd</div>
<div class="t d" style="left:16.61px;top:513.58px;color:#cccccc">539</div>
<div class="t b" style="left:55.03px;top:513.98px;color:#666666">systemd-t</div>
<div class="t d" style="left:160.69px;top:513.58px;color:#cccccc">20</div>
<div class="t d" style="left:208.72px;top:513.58px;color:#cccccc">0</div>
<div class="t d" style="left:237.54px;top:513.58px;color:#11a8cd">138M</div>
<div class="t d" style="left:295.17px;top:513.58px;color:#11a8cd">3</div>
<div class="t d" style="left:304.78px;top:513.58px;color:#cccccc">180</div>
<div class="t d" style="left:352.80px;top:513.58px;color:#11a8cd">2</div>
<div class="t d" style="left:362.41px;top:513.58px;color:#cccccc">652</div>
<div class="t d" style="left:401.43px;top:513.58px;color:#cccccc">S</div>
<div class="t d" style="left:429.65px;top:513.58px;color:#cccccc">0</div>
<div class="t" style="left:439.25px;top:513.98px;color:#cccccc">.</div>
<div class="t d" style="left:448.86px;top:513.58px;color:#cccccc">0</div>
<div class="t d" style="left:477.67px;top:513.58px;color:#cccccc">0</div>
<div class="t" style="left:487.28px;top:513.98px;color:#cccccc">.</div>
<div class="t d" style="left:496.89px;top:513.58px;color:#cccccc">0</div>
<div class="t d" style="left:525.70px;top:513.58px;color:#cccccc">0</div>
<div class="t" style="left:535.31px;top:513.98px;color:#cccccc">:</div>
<div class="t d" style="left:544.91px;top:513.58px;color:#cccccc">00</div>
<div class="t" style="left:564.12px;top:513.98px;color:#cccccc">.</div>
<div class="t d" style="left:573.73px;top:513.58px;color:#cccccc">00</div>
<div class="t" style="left:602.55px;top:513.98px;color:#0dbc79">/lib/systemd/systemd-timesyncd</div>
<div class="t d" style="left:16.61px;top:537.78px;color:#cccccc">394</div>
<div class="t b" style="left:55.03px;top:538.18px;color:#666666">systemd-t</div>
<div class="t d" style="left:160.69px;top:537.78px;color:#cccccc">20</div>
<div class="t d" style="left:208.72px;top:537.78px;color:#cccccc">0</div>
<div class="t d" style="left:237.54px;top:537.78px;color:#11a8cd">138M</div>
<div class="t d" style="left:295.17px;top:537.78px;color:#11a8cd">3</div>
<div class="t d" style="left:304.78px;top:537.78px;color:#cccccc">180</div>
<div class="t d" style="left:352.80px;top:537.78px;color:#11a8cd">2</div>
<div class="t d" style="left:362.41px;top:537.78px;color:#cccccc">652</div>
<div class="t d" style="left:401.43px;top:537.78px;color:#cccccc">S</div>
<div class="t d" style="left:429.65px;top:537.78px;color:#cccccc">0</div>
<div class="t" style="left:439.25px;top:538.18px;color:#cccccc">.</div>
<div class="t d" style="left:448.86px;top:537.78px;color:#cccccc">0</div>
<div class="t d" style="left:477.67px;top:537.78px;color:#cccccc">0</div>
<div class="t" style="left:487.28px;top:538.18px;color:#cccccc">.</div>
<div class="t d" style="left:496.89px;top:537.78px;color:#cccccc">0</div>
<div class="t d" style="left:525.70px;top:537.78px;color:#cccccc">0</div>
<div class="t" style="left:535.31px;top:538.18px;color:#cccccc">:</div>
<div class="t d" style="left:544.91px;top:537.78px;color:#cccccc">00</div>
<div class="t" style="left:564.12px;top:538.18px;color:#cccccc">.</div>
<div class="t d" style="left:573.73px;top:537.78px;color:#cccccc">66</div>
<div class="t" style="left:602.55px;top:538.18px;color:#cccccc">/lib/systemd/systemd-timesyncd</div>
<div class="t d" style="left:16.61px;top:561.99px;color:#cccccc">398</div>
<div class="t b" style="left:55.03px;top:562.39px;color:#666666">systemd-r</div>
<div class="t d" style="left:160.69px;top:561.99px;color:#cccccc">20</div>
<div class="t d" style="left:208.72px;top:561.99px;color:#cccccc">0</div>
<div class="t d" style="left:227.93px;top:561.99px;color:#11a8cd">70</div>
<div class="t d" style="left:247.14px;top:561.99px;color:#cccccc">984</div>
<div class="t d" style="left:295.17px;top:561.99px;color:#11a8cd">6</div>
<div class="t d" style="left:304.78px;top:561.99px;color:#cccccc">464</div>
<div class="t d" style="left:352.80px;top:561.99px;color:#11a8cd">5</div>
<div class="t d" style="left:362.41px;top:561.99px;color:#cccccc">464</div>
<div class="t d" style="left:401.43px;top:561.99px;color:#cccccc">S</div>
<div class="t d" style="left:429.65px;top:561.99px;color:#cccccc">0</div>
<div class="t" style="left:439.25px;top:562.39px;color:#cccccc">.</div>
<div class="t d" style="left:448.86px;top:561.99px;color:#cccccc">0</div>
<div class="t d" style="left:477.67px;top:561.99px;color:#cccccc">0</div>
<div class="t" style="left:487.28px;top:562.39px;color:#cccccc">.</div>
<div class="t d" style="left:496.89px;top:561.99px;color:#cccccc">0</div>
<div class="t d" style="left:525.70px;top:561.99px;color:#cccccc">0</div>
<div class="t" style="left:535.31px;top:562.39px;color:#cccccc">:</div>
<div class="t d" style="left:544.91px;top:561.99px;color:#cccccc">00</div>
<div class="t" style="left:564.12px;top:562.39px;color:#cccccc">.</div>
<div class="t d" style="left:573.73px;top:561.99px;color:#cccccc">98</div>
<div class="t" style="left:602.55px;top:562.39px;color:#cccccc">/lib/systemd/systemd-resolved</div>
<div class="t d" style="left:16.61px;top:586.19px;color:#cccccc">501</div>
<div class="t" style="left:55.03px;top:586.59px;color:#cccccc">root</div>
<div class="t d" style="left:160.69px;top:586.19px;color:#cccccc">20</div>
<div class="t d" style="left:208.72px;top:586.19px;color:#cccccc">0</div>
<div class="t d" style="left:227.93px;top:586.19px;color:#11a8cd">70</div>
<div class="t d" style="left:247.14px;top:586.19px;color:#cccccc">600</div>
<div class="t d" style="left:295.17px;top:586.19px;color:#11a8cd">5</div>
<div class="t d" style="left:304.78px;top:586.19px;color:#cccccc">972</div>
<div class="t d" style="left:352.80px;top:586.19px;color:#11a8cd">5</div>
<div class="t d" style="left:362.41px;top:586.19px;color:#cccccc">196</div>
<div class="t d" style="left:401.43px;top:586.19px;color:#cccccc">S</div>
<div class="t d" style="left:429.65px;top:586.19px;color:#cccccc">0</div>
<div class="t" style="left:439.25px;top:586.59px;color:#cccccc">.</div>
<div class="t d" style="left:448.86px;top:586.19px;color:#cccccc">0</div>
<div class="t d" style="left:477.67px;top:586.19px;color:#cccccc">0</div>
<div class="t" style="left:487.28px;top:586.59px;color:#cccccc">.</div>
<div class="t d" style="left:496.89px;top:586.19px;color:#cccccc">0</div>
<div class="t d" style="left:525.70px;top:586.19px;color:#cccccc">0</div>
<div class="t" style="left:535.31px;top:586.59px;color:#cccccc">:</div>
<div class="t d" style="left:544.91px;top:586.19px;color:#cccccc">00</div>
<div class="t" style="left:564.12px;top:586.59px;color:#cccccc">.</div>
<div class="t d" style="left:573.73px;top:586.19px;color:#cccccc">96</div>
<div class="t" style="left:602.55px;top:586.59px;color:#cccccc">/lib/systemd/systemd-logind</div>
<div class="t d" style="left:16.61px;top:610.40px;color:#cccccc">516</div>
<div class="t" style="left:55.03px;top:610.80px;color:#cccccc">root</div>
<div class="t d" style="left:160.69px;top:610.40px;color:#cccccc">20</div>
<div class="t d" style="left:208.72px;top:610.40px;color:#cccccc">0</div>
<div class="t d" style="left:237.54px;top:610.40px;color:#11a8cd">281M</div>
<div class="t d" style="left:295.17px;top:610.40px;color:#11a8cd">6</div>
<div class="t d" style="left:304.78px;top:610.40px;color:#cccccc">912</div>
<div class="t d" style="left:352.80px;top:610.40px;color:#11a8cd">6</div>
<div class="t d" style="left:362.41px;top:610.40px;color:#cccccc">052</div>
<div class="t d" style="left:401.43px;top:610.40px;color:#cccccc">S</div>
<div class="t d" style="left:429.65px;top:610.40px;color:#cccccc">0</div>
<div class="t" style="left:439.25px;top:610.80px;color:#cccccc">.</div>
<div class="t d" style="left:448.86px;top:610.40px;color:#cccccc">0</div>
<div class="t d" style="left:477.67px;top:610.40px;color:#cccccc">0</div>
<div class="t" style="left:487.28px;top:610.80px;color:#cccccc">.</div>
<div class="t d" style="left:496.89px;top:610.40px;color:#cccccc">0</div>
<div class="t d" style="left:525.70px;top:610.40px;color:#cccccc">0</div>
<div class="t" style="left:535.31px;top:610.80px;color:#cccccc">:</div>
<div class="t d" style="left:544.91px;top:610.40px;color:#cccccc">12</div>
<div class="t" style="left:564.12px;top:610.80px;color:#cccccc">.</div>
<div class="t d" style="left:573.73px;top:610.40px;color:#cccccc">04</div>
<div class="t" style="left:602.55px;top:610.80px;color:#0dbc79">/usr/lib/accountsservice/accounts-</div>
<div class="t d" style="left:-2.00px;top:634.61px;color:#cccccc">F1</div>
<div class="t k d" style="left:17.21px;top:634.61px;color:#000000">H</div>
<div class="t k" style="left:26.22px;top:635.01px;color:#000000">elp  </div>
<div class="t d" style="left:74.84px;top:634.61px;color:#cccccc">F2</div>
<div class="t k d" style="left:94.05px;top:634.61px;color:#000000">S</div>
<div class="t k" style="left:103.06px;top:635.01px;color:#000000">etup </div>
<div class="t d" style="left:151.69px;top:634.61px;color:#cccccc">F3</div>
<div class="t k d" style="left:170.90px;top:634.61px;color:#000000">S</div>
<div class="t k" style="left:179.90px;top:635.01px;color:#000000">earch</div>
<div class="t d" style="left:228.53px;top:634.61px;color:#cccccc">F4</div>
<div class="t k d" style="left:247.74px;top:634.61px;color:#000000">F</div>
<div class="t k" style="left:256.75px;top:635.01px;color:#000000">ilter</div>
<div class="t d" style="left:305.38px;top:634.61px;color:#cccccc">F5</div>
<div class="t k d" style="left:324.59px;top:634.61px;color:#000000">T</div>
<div class="t k" style="left:333.59px;top:635.01px;color:#000000">ree  </div>
<div class="t d" style="left:382.22px;top:634.61px;color:#cccccc">F6</div>
<div class="t k d" style="left:401.43px;top:634.61px;color:#000000">S</div>
<div class="t k" style="left:410.44px;top:635.01px;color:#000000">ort</div>
<div class="t k d" style="left:439.85px;top:634.61px;color:#000000">B</div>
<div class="t k" style="left:448.86px;top:635.01px;color:#000000">y</div>
<div class="t d" style="left:459.06px;top:634.61px;color:#cccccc">F7</div>
<div class="t k d" style="left:478.27px;top:634.61px;color:#000000">N</div>
<div class="t k" style="left:487.28px;top:635.01px;color:#000000">ice -</div>
<div class="t d" style="left:535.91px;top:634.61px;color:#cccccc">F8</div>
<div class="t k d" style="left:555.12px;top:634.61px;color:#000000">N</div>
<div class="t k" style="left:564.12px;top:635.01px;color:#000000">ice +</div>
<div class="t d" style="left:612.75px;top:634.61px;color:#cccccc">F9</div>
<div class="t k d" style="left:631.96px;top:634.61px;color:#000000">K</div>
<div class="t k" style="left:640.97px;top:635.01px;color:#000000">ill  </div>
<div class="t d" style="left:689.60px;top:634.61px;color:#cccccc">F10</div>
<div class="t k d" style="left:718.41px;top:634.61px;color:#000000">Q</div>
<div class="t k" style="left:727.42px;top:635.01px;color:#000000">uit</div>
<svg style="position:absolute;left:0;top:0" width="934" height="662" viewBox="0 0 934 662"><path fill="#1e1e1e" d="M385.47 38.81h2.40v3.00h-2.40zM404.68 38.81h2.40v3.00h-2.40zM827.32 38.81h2.40v3.00h-2.40zM846.53 38.81h2.40v3.00h-2.40zM385.47 63.01h2.40v3.00h-2.40zM404.68 63.01h2.40v3.00h-2.40zM827.32 63.01h2.40v3.00h-2.40zM846.53 63.01h2.40v3.00h-2.40zM385.47 87.22h2.40v3.00h-2.40zM404.68 87.22h2.40v3.00h-2.40zM827.32 87.22h2.40v3.00h-2.40zM846.53 87.22h2.40v3.00h-2.40zM385.47 111.42h2.40v3.00h-2.40zM404.68 111.42h2.40v3.00h-2.40zM827.32 111.42h2.40v3.00h-2.40zM846.53 111.42h2.40v3.00h-2.40zM356.65 159.84h2.40v3.00h-2.40zM596.69 159.74h2.60v3.20h-2.60zM615.90 159.74h2.60v3.20h-2.60zM625.51 159.74h2.60v3.20h-2.60zM644.72 159.74h2.60v3.20h-2.60zM663.93 159.74h2.60v3.20h-2.60zM673.53 159.74h2.60v3.20h-2.60zM692.85 159.84h2.40v3.00h-2.40zM712.06 159.84h2.40v3.00h-2.40zM721.66 159.84h2.40v3.00h-2.40zM615.90 183.94h2.60v3.20h-2.60zM174.15 280.87h2.40v3.00h-2.40zM212.57 280.87h2.40v3.00h-2.40zM241.39 280.87h2.40v3.00h-2.40zM260.60 280.87h2.40v3.00h-2.40zM375.86 280.87h2.40v3.00h-2.40zM433.50 280.87h2.40v3.00h-2.40zM452.71 280.87h2.40v3.00h-2.40zM481.52 280.87h2.40v3.00h-2.40zM500.74 280.87h2.40v3.00h-2.40zM529.55 280.87h2.40v3.00h-2.40zM548.76 280.87h2.40v3.00h-2.40zM558.37 280.87h2.40v3.00h-2.40zM587.19 280.87h2.40v3.00h-2.40zM20.46 305.07h2.40v3.00h-2.40zM174.15 305.07h2.40v3.00h-2.40zM212.57 305.07h2.40v3.00h-2.40zM356.65 305.07h2.40v3.00h-2.40zM366.26 305.07h2.40v3.00h-2.40zM433.50 305.07h2.40v3.00h-2.40zM452.71 305.07h2.40v3.00h-2.40zM587.19 305.07h2.40v3.00h-2.40zM39.67 329.28h2.40v3.00h-2.40zM174.15 329.28h2.40v3.00h-2.40zM212.57 329.28h2.40v3.00h-2.40zM366.26 329.28h2.40v3.00h-2.40zM433.50 329.28h2.40v3.00h-2.40zM452.71 329.28h2.40v3.00h-2.40zM481.52 329.28h2.40v3.00h-2.40zM529.55 329.28h2.40v3.00h-2.40zM587.19 329.28h2.40v3.00h-2.40zM174.15 353.48h2.40v3.00h-2.40zM212.57 353.48h2.40v3.00h-2.40zM356.65 353.48h2.40v3.00h-2.40zM366.26 353.48h2.40v3.00h-2.40zM433.50 353.48h2.40v3.00h-2.40zM452.71 353.48h2.40v3.00h-2.40zM529.55 353.48h2.40v3.00h-2.40zM174.15 377.69h2.40v3.00h-2.40zM212.57 377.69h2.40v3.00h-2.40zM366.26 377.69h2.40v3.00h-2.40zM375.86 377.69h2.40v3.00h-2.40zM385.47 377.69h2.40v3.00h-2.40zM433.50 377.69h2.40v3.00h-2.40zM452.71 377.69h2.40v3.00h-2.40zM481.52 377.69h2.40v3.00h-2.40zM548.76 377.69h2.40v3.00h-2.40zM577.58 377.69h2.40v3.00h-2.40zM174.15 401.90h2.40v3.00h-2.40zM212.57 401.90h2.40v3.00h-2.40zM318.23 401.90h2.40v3.00h-2.40zM375.86 401.90h2.40v3.00h-2.40zM433.50 401.90h2.40v3.00h-2.40zM452.71 401.90h2.40v3.00h-2.40zM481.52 401.90h2.40v3.00h-2.40zM529.55 401.90h2.40v3.00h-2.40zM558.37 401.90h2.40v3.00h-2.40zM260.60 426.10h2.40v3.00h-2.40zM433.50 426.10h2.40v3.00h-2.40zM452.71 426.10h2.40v3.00h-2.40zM481.52 426.10h2.40v3.00h-2.40zM529.55 426.10h2.40v3.00h-2.40zM174.15 450.31h2.40v3.00h-2.40zM212.57 450.31h2.40v3.00h-2.40zM250.99 450.31h2.40v3.00h-2.40zM375.86 450.31h2.40v3.00h-2.40zM433.50 450.31h2.40v3.00h-2.40zM452.71 450.31h2.40v3.00h-2.40zM481.52 450.31h2.40v3.00h-2.40zM500.74 450.31h2.40v3.00h-2.40zM529.55 450.31h2.40v3.00h-2.40zM548.76 450.31h2.40v3.00h-2.40zM558.37 450.31h2.40v3.00h-2.40zM577.58 450.31h2.40v3.00h-2.40zM174.15 474.51h2.40v3.00h-2.40zM212.57 474.51h2.40v3.00h-2.40zM433.50 474.51h2.40v3.00h-2.40zM452.71 474.51h2.40v3.00h-2.40zM481.52 474.51h2.40v3.00h-2.40zM500.74 474.51h2.40v3.00h-2.40zM529.55 474.51h2.40v3.00h-2.40zM548.76 474.51h2.40v3.00h-2.40zM174.15 498.72h2.40v3.00h-2.40zM212.57 498.72h2.40v3.00h-2.40zM433.50 498.72h2.40v3.00h-2.40zM452.71 498.72h2.40v3.00h-2.40zM481.52 498.72h2.40v3.00h-2.40zM500.74 498.72h2.40v3.00h-2.40zM529.55 498.72h2.40v3.00h-2.40zM548.76 498.72h2.40v3.00h-2.40zM587.19 498.72h2.40v3.00h-2.40zM174.15 522.93h2.40v3.00h-2.40zM212.57 522.93h2.40v3.00h-2.40zM327.84 522.93h2.40v3.00h-2.40zM433.50 522.93h2.40v3.00h-2.40zM452.71 522.93h2.40v3.00h-2.40zM481.52 522.93h2.40v3.00h-2.40zM500.74 522.93h2.40v3.00h-2.40zM529.55 522.93h2.40v3.00h-2.40zM548.76 522.93h2.40v3.00h-2.40zM558.37 522.93h2.40v3.00h-2.40zM577.58 522.93h2.40v3.00h-2.40zM587.19 522.93h2.40v3.00h-2.40zM174.15 547.13h2.40v3.00h-2.40zM212.57 547.13h2.40v3.00h-2.40zM327.84 547.13h2.40v3.00h-2.40zM433.50 547.13h2.40v3.00h-2.40zM452.71 547.13h2.40v3.00h-2.40zM481.52 547.13h2.40v3.00h-2.40zM500.74 547.13h2.40v3.00h-2.40zM529.55 547.13h2.40v3.00h-2.40zM548.76 547.13h2.40v3.00h-2.40zM558.37 547.13h2.40v3.00h-2.40zM174.15 571.34h2.40v3.00h-2.40zM212.57 571.34h2.40v3.00h-2.40zM241.39 571.34h2.40v3.00h-2.40zM433.50 571.34h2.40v3.00h-2.40zM452.71 571.34h2.40v3.00h-2.40zM481.52 571.34h2.40v3.00h-2.40zM500.74 571.34h2.40v3.00h-2.40zM529.55 571.34h2.40v3.00h-2.40zM548.76 571.34h2.40v3.00h-2.40zM558.37 571.34h2.40v3.00h-2.40zM30.07 595.54h2.40v3.00h-2.40zM174.15 595.54h2.40v3.00h-2.40zM212.57 595.54h2.40v3.00h-2.40zM241.39 595.54h2.40v3.00h-2.40zM260.60 595.54h2.40v3.00h-2.40zM270.20 595.54h2.40v3.00h-2.40zM433.50 595.54h2.40v3.00h-2.40zM452.71 595.54h2.40v3.00h-2.40zM481.52 595.54h2.40v3.00h-2.40zM500.74 595.54h2.40v3.00h-2.40zM529.55 595.54h2.40v3.00h-2.40zM548.76 595.54h2.40v3.00h-2.40zM558.37 595.54h2.40v3.00h-2.40zM174.15 619.75h2.40v3.00h-2.40zM212.57 619.75h2.40v3.00h-2.40zM366.26 619.75h2.40v3.00h-2.40zM433.50 619.75h2.40v3.00h-2.40zM452.71 619.75h2.40v3.00h-2.40zM481.52 619.75h2.40v3.00h-2.40zM500.74 619.75h2.40v3.00h-2.40zM529.55 619.75h2.40v3.00h-2.40zM577.58 619.75h2.40v3.00h-2.40zM712.66 643.96h2.40v3.00h-2.40z"/><path fill="#11a8cd" d="M174.15 256.66h2.40v3.00h-2.40zM212.57 256.66h2.40v3.00h-2.40zM318.23 256.66h2.40v3.00h-2.40zM327.84 256.66h2.40v3.00h-2.40zM433.50 256.66h2.40v3.00h-2.40zM481.52 256.66h2.40v3.00h-2.40zM500.74 256.66h2.40v3.00h-2.40zM529.55 256.66h2.40v3.00h-2.40zM548.76 256.66h2.40v3.00h-2.40zM558.37 256.66h2.40v3.00h-2.40zM577.58 256.66h2.40v3.00h-2.40z"/><path fill="none" stroke="#6e6e6e" stroke-width="1.2" d="M384.17 44.31L389.17 36.31M403.38 44.31L408.38 36.31M826.02 44.31L831.02 36.31M845.23 44.31L850.23 36.31M384.17 68.51L389.17 60.51M403.38 68.51L408.38 60.51M826.02 68.51L831.02 60.51M845.23 68.51L850.23 60.51M384.17 92.72L389.17 84.72M403.38 92.72L408.38 84.72M826.02 92.72L831.02 84.72M845.23 92.72L850.23 84.72M384.17 116.92L389.17 108.92M403.38 116.92L408.38 108.92M826.02 116.92L831.02 108.92M845.23 116.92L850.23 108.92M355.35 165.34L360.35 157.34"/><path fill="none" stroke="#e5e5e5" stroke-width="1.7" d="M596.39 164.64L599.59 158.04M615.60 164.64L618.80 158.04M625.21 164.64L628.41 158.04"/><path fill="none" stroke="#11a8cd" stroke-width="1.7" d="M644.42 164.64L647.62 158.04M663.63 164.64L666.83 158.04M673.23 164.64L676.43 158.04M615.60 188.84L618.80 182.24"/><path fill="none" stroke="#11a8cd" stroke-width="1.2" d="M691.55 165.34L696.55 157.34M710.76 165.34L715.76 157.34M720.36 165.34L725.36 157.34M240.09 286.37L245.09 278.37M355.35 310.57L360.35 302.57M355.35 358.98L360.35 350.98M259.30 431.60L264.30 423.60M249.69 455.81L254.69 447.81M240.09 576.84L245.09 568.84M240.09 601.04L245.09 593.04"/><path fill="none" stroke="#000000" stroke-width="1.2" d="M172.85 262.16L177.85 254.16M211.27 262.16L216.27 254.16M316.93 262.16L321.93 254.16M326.54 262.16L331.54 254.16M432.20 262.16L437.20 254.16M480.22 262.16L485.22 254.16M499.44 262.16L504.44 254.16M528.25 262.16L533.25 254.16M547.46 262.16L552.46 254.16M557.07 262.16L562.07 254.16M576.28 262.16L581.28 254.16"/><path fill="none" stroke="#cccccc" stroke-width="1.2" d="M172.85 286.37L177.85 278.37M211.27 286.37L216.27 278.37M259.30 286.37L264.30 278.37M374.56 286.37L379.56 278.37M432.20 286.37L437.20 278.37M451.41 286.37L456.41 278.37M480.22 286.37L485.22 278.37M499.44 286.37L504.44 278.37M528.25 286.37L533.25 278.37M547.46 286.37L552.46 278.37M557.07 286.37L562.07 278.37M585.89 286.37L590.89 278.37M19.16 310.57L24.16 302.57M172.85 310.57L177.85 302.57M211.27 310.57L216.27 302.57M364.96 310.57L369.96 302.57M432.20 310.57L437.20 302.57M451.41 310.57L456.41 302.57M585.89 310.57L590.89 302.57M38.37 334.78L43.37 326.78M172.85 334.78L177.85 326.78M211.27 334.78L216.27 326.78M364.96 334.78L369.96 326.78M432.20 334.78L437.20 326.78M451.41 334.78L456.41 326.78M480.22 334.78L485.22 326.78M528.25 334.78L533.25 326.78M585.89 334.78L590.89 326.78M172.85 358.98L177.85 350.98M211.27 358.98L216.27 350.98M364.96 358.98L369.96 350.98M432.20 358.98L437.20 350.98M451.41 358.98L456.41 350.98M528.25 358.98L533.25 350.98M172.85 383.19L177.85 375.19M211.27 383.19L216.27 375.19M364.96 383.19L369.96 375.19M374.56 383.19L379.56 375.19M384.17 383.19L389.17 375.19M432.20 383.19L437.20 375.19M451.41 383.19L456.41 375.19M480.22 383.19L485.22 375.19M547.46 383.19L552.46 375.19M576.28 383.19L581.28 375.19M172.85 407.40L177.85 399.40M211.27 407.40L216.27 399.40M316.93 407.40L321.93 399.40M374.56 407.40L379.56 399.40M432.20 407.40L437.20 399.40M451.41 407.40L456.41 399.40M480.22 407.40L485.22 399.40M528.25 407.40L533.25 399.40M557.07 407.40L562.07 399.40M432.20 431.60L437.20 423.60M451.41 431.60L456.41 423.60M480.22 431.60L485.22 423.60M528.25 431.60L533.25 423.60M172.85 455.81L177.85 447.81M211.27 455.81L216.27 447.81M374.56 455.81L379.56 447.81M432.20 455.81L437.20 447.81M451.41 455.81L456.41 447.81M480.22 455.81L485.22 447.81M499.44 455.81L504.44 447.81M528.25 455.81L533.25 447.81M547.46 455.81L552.46 447.81M557.07 455.81L562.07 447.81M576.28 455.81L581.28 447.81M172.85 480.01L177.85 472.01M211.27 480.01L216.27 472.01M432.20 480.01L437.20 472.01M451.41 480.01L456.41 472.01M480.22 480.01L485.22 472.01M499.44 480.01L504.44 472.01M528.25 480.01L533.25 472.01M547.46 480.01L552.46 472.01M172.85 504.22L177.85 496.22M211.27 504.22L216.27 496.22M432.20 504.22L437.20 496.22M451.41 504.22L456.41 496.22M480.22 504.22L485.22 496.22M499.44 504.22L504.44 496.22M528.25 504.22L533.25 496.22M547.46 504.22L552.46 496.22M585.89 504.22L590.89 496.22M172.85 528.43L177.85 520.43M211.27 528.43L216.27 520.43M326.54 528.43L331.54 520.43M432.20 528.43L437.20 520.43M451.41 528.43L456.41 520.43M480.22 528.43L485.22 520.43M499.44 528.43L504.44 520.43M528.25 528.43L533.25 520.43M547.46 528.43L552.46 520.43M557.07 528.43L562.07 520.43M576.28 528.43L581.28 520.43M585.89 528.43L590.89 520.43M172.85 552.63L177.85 544.63M211.27 552.63L216.27 544.63M326.54 552.63L331.54 544.63M432.20 552.63L437.20 544.63M451.41 552.63L456.41 544.63M480.22 552.63L485.22 544.63M499.44 552.63L504.44 544.63M528.25 552.63L533.25 544.63M547.46 552.63L552.46 544.63M557.07 552.63L562.07 544.63M172.85 576.84L177.85 568.84M211.27 576.84L216.27 568.84M432.20 576.84L437.20 568.84M451.41 576.84L456.41 568.84M480.22 576.84L485.22 568.84M499.44 576.84L504.44 568.84M528.25 576.84L533.25 568.84M547.46 576.84L552.46 568.84M557.07 576.84L562.07 568.84M28.77 601.04L33.77 593.04M172.85 601.04L177.85 593.04M211.27 601.04L216.27 593.04M259.30 601.04L264.30 593.04M268.90 601.04L273.90 593.04M432.20 601.04L437.20 593.04M451.41 601.04L456.41 593.04M480.22 601.04L485.22 593.04M499.44 601.04L504.44 593.04M528.25 601.04L533.25 593.04M547.46 601.04L552.46 593.04M557.07 601.04L562.07 593.04M172.85 625.25L177.85 617.25M211.27 625.25L216.27 617.25M364.96 625.25L369.96 617.25M432.20 625.25L437.20 617.25M451.41 625.25L456.41 617.25M480.22 625.25L485.22 617.25M499.44 625.25L504.44 617.25M528.25 625.25L533.25 617.25M576.28 625.25L581.28 617.25M711.36 649.46L716.36 641.46"/></svg>
</div>
<div id="topbar"></div><div id="thumb"></div>
<div id="bshadow" style="left:896.80px;top:0.40px"></div>
<div id="banner" style="left:896.80px;top:0.40px">DEBUG</div>
</div></body></html>
